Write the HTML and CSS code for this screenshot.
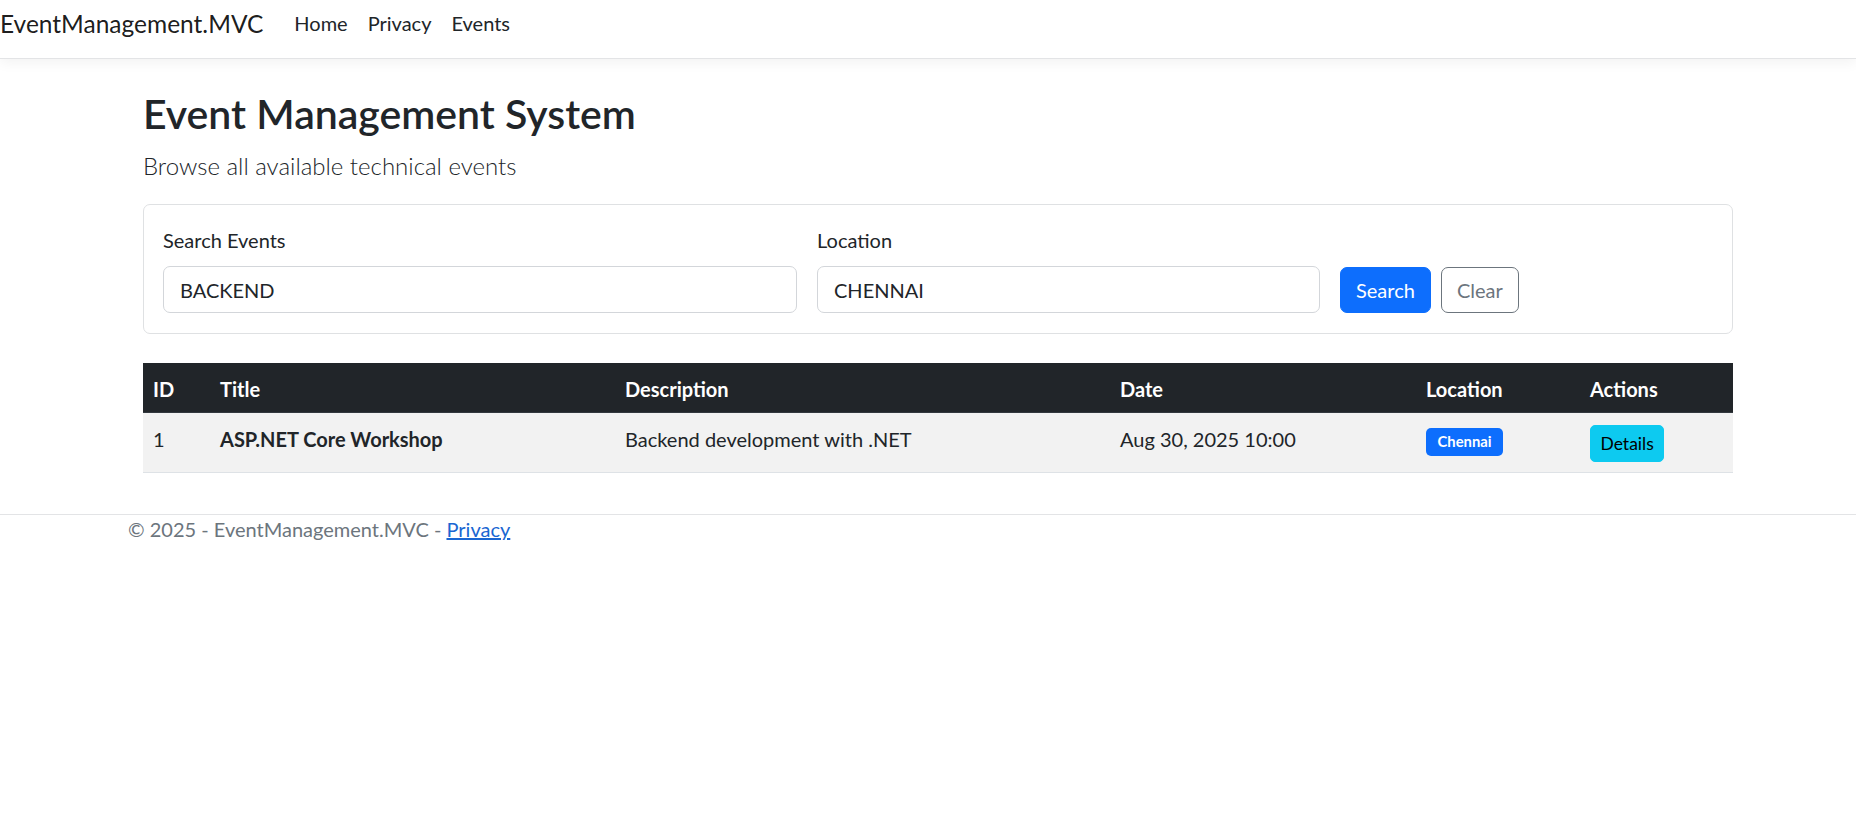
FILE: index.html
```html
<!DOCTYPE html>
<html lang="en">
<head>
<meta charset="utf-8">
<title>Event Management System - EventManagement.MVC</title>
<link rel="stylesheet" href="styles.css">
</head>
<body>
<header class="site-header">
  <nav class="navbar">
    <a class="brand" href="#">EventManagement.MVC</a>
    <ul class="nav">
      <li><a class="nav-link" href="#">Home</a></li>
      <li><a class="nav-link" href="#">Privacy</a></li>
      <li><a class="nav-link" href="#">Events</a></li>
    </ul>
  </nav>
</header>
<div class="container">
  <main class="main">
    <h1 class="title">Event Management System</h1>
    <p class="lead">Browse all available technical events</p>
    <div class="card">
      <form class="filters">
        <div class="field field-search">
          <label class="label" for="q">Search Events</label>
          <input class="input" id="q" type="text" value="BACKEND">
        </div>
        <div class="field field-location">
          <label class="label" for="loc">Location</label>
          <input class="input" id="loc" type="text" value="CHENNAI">
        </div>
        <div class="actions">
          <button class="btn btn-primary" type="button">Search</button>
          <a class="btn btn-outline" href="#">Clear</a>
        </div>
      </form>
    </div>
    <table class="events">
      <colgroup>
        <col class="c-id"><col class="c-title"><col class="c-desc"><col class="c-date"><col class="c-loc"><col class="c-act">
      </colgroup>
      <thead>
        <tr><th>ID</th><th>Title</th><th>Description</th><th>Date</th><th>Location</th><th>Actions</th></tr>
      </thead>
      <tbody>
        <tr>
          <td>1</td>
          <td class="strong">ASP.NET Core Workshop</td>
          <td>Backend development with .NET</td>
          <td>Aug 30, 2025 10:00</td>
          <td><span class="badge">Chennai</span></td>
          <td><a class="btn btn-sm btn-info" href="#">Details</a></td>
        </tr>
      </tbody>
    </table>
  </main>
</div>
<footer class="footer">
  <div class="footer-inner">&copy; 2025 - EventManagement.MVC - <a class="footer-link" href="#">Privacy</a></div>
</footer>
</body>
</html>
```
FILE: styles.css
```css
* { box-sizing: border-box; }
html, body { margin: 0; padding: 0; }
body {
  font-family: Lato, "Open Sans", "Liberation Sans", sans-serif;
  font-size: 20px;
  line-height: 28.8px;
  color: #212529;
  background: #fff;
}
a { text-decoration: none; }

.site-header {
  border-bottom: 1px solid #e3e4e6;
  box-shadow: 0 4px 12px rgba(0,0,0,.05);
}
.navbar {
  height: 58px;
  display: flex;
  align-items: center;
  padding-bottom: 11px;
}
.brand {
  font-size: 24.5px;
  color: rgba(0,0,0,.9);
  margin-right: 21px;
  line-height: 36px;
}
.nav {
  display: flex;
  list-style: none;
  margin: 0;
  padding: 0;
}
.nav-link {
  display: block;
  padding: 0 10px;
  color: #212529;
}

.container {
  width: 1590px;
  margin-left: 143px;
}
.main { padding-top: 26.5px; }
.title {
  font-size: 41px;
  font-weight: 600;
  line-height: 55px;
  margin: 0 0 7px;
}
.lead {
  font-size: 24px;
  font-weight: 300;
  line-height: 36px;
  margin: 0 0 20px;
}
.card {
  border: 1px solid #dfe1e3;
  border-radius: 7px;
  padding: 21px 19px 20px;
}
.filters {
  display: grid;
  grid-template-columns: 634px 503px auto;
  column-gap: 20px;
  align-items: end;
}
.label {
  display: block;
  line-height: 28.8px;
  margin-bottom: 12px;
}
.input {
  display: block;
  width: 100%;
  height: 47px;
  padding: 0 16px;
  font: inherit;
  color: #212529;
  border: 1px solid #d3d6da;
  border-radius: 7px;
  background: #fff;
}
.actions {
  display: flex;
  gap: 10px;
}
.btn {
  display: inline-block;
  font: inherit;
  line-height: 28.8px;
  padding: 8px 15px;
  border: 1px solid transparent;
  border-radius: 7px;
  cursor: pointer;
}
.btn-primary {
  background: #0d6efd;
  border-color: #0d6efd;
  color: #fff;
}
.btn-outline {
  background: #fff;
  border-color: #6c757d;
  color: #6c757d;
}

.events {
  width: 1590px;
  margin-top: 29px;
  border-collapse: collapse;
  table-layout: fixed;
}
.c-id { width: 67px; }
.c-title { width: 405px; }
.c-desc { width: 495px; }
.c-date { width: 306px; }
.c-loc { width: 164px; }
.c-act { width: 153px; }
.events th, .events td {
  text-align: left;
  padding: 12px 10px 10px;
  border-bottom: 1px solid #dee2e6;
  vertical-align: top;
}
.events thead th {
  background: #212529;
  color: #fff;
  font-weight: 700;
  padding: 12px 10px 8px;
  border-bottom-color: #32383e;
}
.events tbody tr { background: #f2f2f2; }
.strong { font-weight: 700; }
.badge {
  display: inline-block;
  vertical-align: top;
  margin-top: 3px;
  background: #0d6efd;
  color: #fff;
  font-size: 14.8px;
  font-weight: 700;
  line-height: 1;
  padding: 6px 11.5px 7px;
  border-radius: 5px;
}
.btn-sm {
  font-size: 17.5px;
  line-height: 25.2px;
  padding: 5px 9.5px;
  border-radius: 5px;
  vertical-align: top;
}
.btn-info {
  background: #0dcaf0;
  border-color: #0dcaf0;
  color: #000;
}

.footer {
  margin-top: 41px;
  border-top: 1px solid #e3e4e6;
}
.footer-inner {
  padding-left: 128px;
  color: #6c757d;
  line-height: 28.8px;
  white-space: nowrap;
}
.footer-link {
  color: #1a66d2;
  text-decoration: underline;
}
```
